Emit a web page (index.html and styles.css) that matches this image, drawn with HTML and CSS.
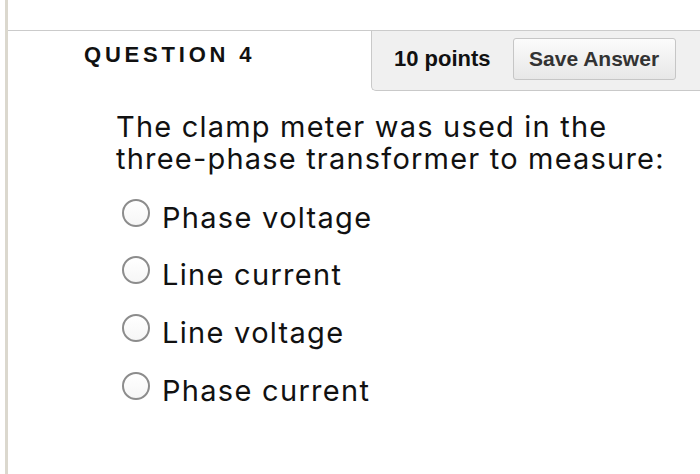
FILE: index.html
```html
<!DOCTYPE html>
<html lang="en">
<head>
<meta charset="utf-8">
<title>Question 4</title>
<link rel="stylesheet" href="styles.css">
</head>
<body>
<div class="page">
  <div class="top-space"></div>
  <div class="qhead">
    <h2 class="qtitle">QUESTION 4</h2>
    <div class="qpanel">
      <span class="points">10 points</span>
      <button class="save-btn" type="button">Save Answer</button>
    </div>
  </div>
  <div class="qbody">
    <p class="qtext">The clamp meter was used in the<br>three-phase transformer to measure:</p>
    <ul class="options">
      <li class="option"><input class="radio" type="radio" name="q4"><span class="label">Phase voltage</span></li>
      <li class="option"><input class="radio" type="radio" name="q4"><span class="label">Line current</span></li>
      <li class="option"><input class="radio" type="radio" name="q4"><span class="label">Line voltage</span></li>
      <li class="option"><input class="radio" type="radio" name="q4"><span class="label">Phase current</span></li>
    </ul>
  </div>
</div>
</body>
</html>
```

FILE: styles.css
```css
html, body {
  margin: 0;
  padding: 0;
  background: #ffffff;
}

body {
  font-family: "Liberation Sans", Arial, Helvetica, sans-serif;
  color: #111111;
}

.page {
  margin-left: 5px;
  border-left: 3px solid #dbd8ce;
  height: 474px;
  box-sizing: border-box;
  overflow: hidden;
}

.top-space {
  height: 30px;
}

.qhead {
  display: flex;
  justify-content: space-between;
  align-items: flex-start;
  border-top: 1px solid #cbcbcb;
}

.qtitle {
  margin: 0;
  padding: 11px 0 0 76px;
  font-size: 22px;
  line-height: 26px;
  font-weight: bold;
  letter-spacing: 3.8px;
  color: #111111;
}

.qpanel {
  width: 306px;
  height: 52px;
  display: flex;
  align-items: flex-start;
  gap: 22px;
  padding: 7px 0 0 22px;
  background: #f0f0f0;
  border-left: 1px solid #c9c9c9;
  border-bottom: 1px solid #c9c9c9;
  border-bottom-left-radius: 5px;
}

.points {
  font-size: 22px;
  line-height: 42px;
  font-weight: bold;
  color: #111111;
}

.save-btn {
  width: 163px;
  height: 42px;
  box-sizing: border-box;
  padding: 0;
  border: 1px solid #c6c6c6;
  border-radius: 3px;
  background: linear-gradient(#fbfbfb, #e7e7e7);
  font-family: "Liberation Sans", Arial, Helvetica, sans-serif;
  font-size: 21px;
  line-height: 40px;
  font-weight: bold;
  color: #333333;
  text-align: center;
}

.qbody {
  padding-left: 108px;
  padding-top: 20px;
}

.qtext {
  margin: 0;
  font-family: Inter, "Liberation Sans", Arial, sans-serif;
  font-size: 29px;
  line-height: 32px;
  letter-spacing: 1.2px;
  color: #111111;
}

.options {
  list-style: none;
  margin: 26.5px 0 0 6px;
  padding: 0;
  display: flex;
  flex-direction: column;
  gap: 25.7px;
}

.option {
  display: flex;
  align-items: flex-start;
  gap: 12px;
}

.radio {
  appearance: none;
  -webkit-appearance: none;
  margin: -3px 0 0 0;
  width: 28px;
  height: 28px;
  box-sizing: border-box;
  border: 2px solid #8c8c8c;
  border-radius: 50%;
  background: linear-gradient(#ffffff, #f6f6f6);
  flex: none;
}

.label {
  font-family: Inter, "Liberation Sans", Arial, sans-serif;
  font-size: 29px;
  line-height: 32px;
  letter-spacing: 1.3px;
  color: #111111;
}
```
